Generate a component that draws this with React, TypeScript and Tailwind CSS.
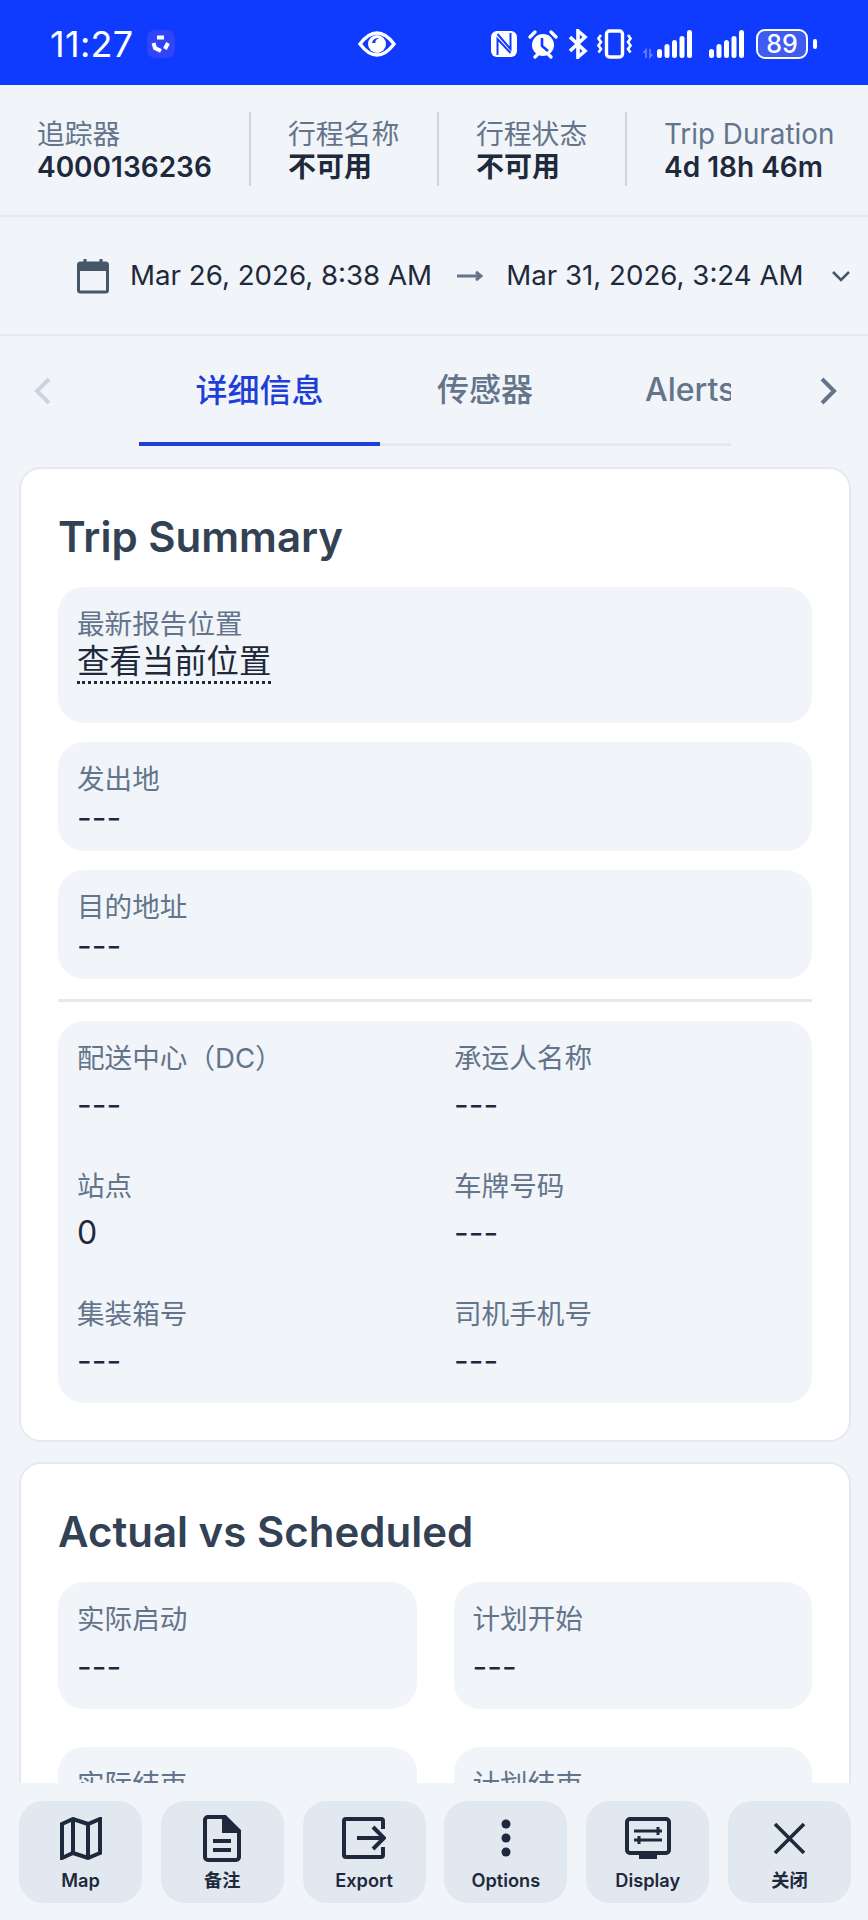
import React from "react";

const F = { fontFamily: 'Inter, "Noto Sans CJK SC", sans-serif' };

function Stat({ label, value, cls }: { label: string; value: string; cls: string }) {
  return (
    <div className={cls}>
      <div className="text-[27.8px] leading-[36px] text-[#64748b]">{label}</div>
      <div className="-mt-[1px] text-[28px] leading-[32px] font-semibold text-[#1e293b]">{value}</div>
    </div>
  );
}

function Box({ label, value }: { label: string; value: string }) {
  return (
    <div className="h-[109px] rounded-[26px] bg-[#f1f5f9] px-[19px] pt-[18px]">
      <div className="text-[27.6px] leading-[38px] text-[#64748b]">{label}</div>
      <div className="mt-[1px] text-[32px] leading-[38px] text-[#1e293b]">{value}</div>
    </div>
  );
}

function GridField({ label, value }: { label: string; value: string }) {
  return (
    <div className="h-[128px]">
      <div className="text-[27.6px] leading-[38px] text-[#64748b]">{label}</div>
      <div className="mt-[9px] text-[32px] leading-[38px] text-[#1e293b]">{value}</div>
    </div>
  );
}

function Big({ label, value }: { label: string; value: string }) {
  return (
    <div className="h-[127px] rounded-[26px] bg-[#f1f5f9] px-[19px] pt-[18px]">
      <div className="text-[27.6px] leading-[38px] text-[#64748b]">{label}</div>
      <div className="mt-[10px] text-[32px] leading-[38px] text-[#1e293b]">{value}</div>
    </div>
  );
}

function ActionBtn({ label, children }: { label: string; children: React.ReactNode }) {
  return (
    <div className="flex h-[102px] w-[123px] flex-col items-center rounded-[24px] bg-[#e2e8f0]">
      <div className="mt-[12px] flex h-[50px] w-[50px] items-center justify-center">{children}</div>
      <div className="mt-[5px] text-[18.2px] leading-[24px] font-semibold text-[#1e293b]">{label}</div>
    </div>
  );
}

function Bars() {
  return (
    <>
      <rect x="0" y="20" width="5" height="9" rx="2.5" />
      <rect x="7.5" y="15" width="5" height="14" rx="2.5" />
      <rect x="15" y="11" width="5" height="18" rx="2.5" />
      <rect x="22.5" y="7" width="5" height="22" rx="2.5" />
      <rect x="30" y="1" width="5" height="28" rx="2.5" />
    </>
  );
}

function StatusIcons() {
  return (
    <div className="flex items-center text-white">
      <svg width="26" height="26" viewBox="0 0 26 26">
        <rect width="26" height="26" rx="6" fill="white" />
        <path d="M6.5 24V8l13 14M19.5 2v16L6.5 3" fill="none" stroke="#0f3bff" strokeWidth="2" />
      </svg>
      <svg width="30" height="30" viewBox="0 0 30 30" className="ml-[11px]">
        <circle cx="15" cy="16" r="11" fill="white" />
        <path d="M14 9v8l6 5" fill="none" stroke="#0f3bff" strokeWidth="2.6" />
        <path d="M2 8l5-5M28 8l-5-5M7 28l3-3M23 28l-3-3" fill="none" stroke="white" strokeWidth="3.2" strokeLinecap="round" />
      </svg>
      <svg width="20" height="30" viewBox="0 0 20 30" className="ml-[10px]" fill="none" stroke="white" strokeWidth="3.6">
        <path d="M2 8l15 14-7 6V2l7 6L2 22" />
      </svg>
      <svg width="35" height="30" viewBox="0 0 35 30" className="ml-[9px]" fill="none" stroke="white">
        <rect x="9.5" y="2" width="16" height="26" rx="3" strokeWidth="3.4" />
        <path d="M4 6L1.5 9.5 4 13 1.5 16.5 4 20 1.5 23.5M31 6l2.5 3.5L31 13l2.5 3.5L31 20l2.5 3.5" strokeWidth="2.6" />
      </svg>
      <svg width="50" height="30" viewBox="0 0 50 30" className="ml-[11px]" fill="white">
        <path d="M3 29v-8l-2.5 3M7 20v8l2.5-3" fill="none" stroke="#6a85ff" strokeWidth="1.6" />
        <g transform="translate(14 0)"><Bars /></g>
      </svg>
      <svg width="36" height="30" viewBox="0 0 36 30" className="ml-[16px]" fill="white">
        <Bars />
      </svg>
      <div className="relative ml-[11px] flex h-[30px] w-[52px] items-center justify-center overflow-visible rounded-[9px] border-[2.5px] border-white bg-[#3f5cf2] text-[25px] leading-none font-medium">
        89
        <span className="absolute right-[-11px] top-[8px] h-[10px] w-[4px] rounded-full bg-white" />
      </div>
    </div>
  );
}

export default function App() {
  return (
    <div style={F} className="flex h-[1920px] w-[868px] flex-col overflow-hidden bg-[#f1f5f9]">
      <div className="flex h-[85px] shrink-0 items-center bg-[#0f3bff] pl-[50px] pt-[3px] text-white">
        <div className="w-[97px] text-[36px] leading-none tracking-[0.3px]">11:27</div>
        <div className="flex h-[28px] w-[28px] items-center justify-center rounded-[8px] bg-[#2f45f7]">
          <svg width="20" height="20" viewBox="0 0 20 20" fill="none" stroke="white" strokeWidth="4">
            <path d="M6 3.5h7M17 9l-3 6M10 17l-6-3-1.500-5" />
          </svg>
        </div>
        <div className="ml-[183px]">
          <svg width="38" height="26" viewBox="0 0 38 26">
            <path d="M2 13C8 5 13 2 19 2s11 3 17 11c-6 8-11 11-17 11S8 21 2 13z" fill="none" stroke="white" strokeWidth="3.4" />
            <circle cx="19" cy="13" r="9" fill="white" />
            <path d="M14 12a6 6 0 0 1 7-5c-3 1-4 3-3.500 5z" fill="#0f3bff" />
          </svg>
        </div>
        <div className="ml-[95px]"><StatusIcons /></div>
      </div>

      <div className="flex h-[132px] shrink-0 items-center border-b-2 border-[#e5e9ef] pb-[2px]">
        <Stat cls="w-[249px] pl-[37px]" label="追踪器" value="4000136236" />
        <div className="h-[74px] w-[2px] bg-[#cbd5e1]" />
        <Stat cls="w-[186px] pl-[37px]" label="行程名称" value="不可用" />
        <div className="h-[74px] w-[2px] bg-[#cbd5e1]" />
        <Stat cls="w-[186px] pl-[37px]" label="行程状态" value="不可用" />
        <div className="h-[74px] w-[2px] bg-[#cbd5e1]" />
        <Stat cls="flex-1 pl-[37px] whitespace-nowrap" label="Trip Duration" value="4d 18h 46m" />
      </div>

      <div className="flex h-[119px] shrink-0 items-center border-b-2 border-[#e5e9ef] pl-[77px] text-[#1e293b]">
        <svg width="32" height="36" viewBox="0 0 32 36" fill="none" className="text-[#475569]">
          <rect x="1.500" y="5" width="29" height="29" rx="2" stroke="currentColor" strokeWidth="3" />
          <rect x="1.500" y="5" width="29" height="8" fill="currentColor" />
          <path d="M8 1v6M24 1v6" stroke="currentColor" strokeWidth="3" />
        </svg>
        <span className="ml-[21px] whitespace-nowrap text-[27.7px]">Mar 26, 2026, 8:38 AM</span>
        <svg width="26" height="14" viewBox="0 0 26 14" className="ml-[25px]" fill="none" stroke="#64748b" strokeWidth="3">
          <path d="M0 7h24M19 3l5 4-5 4" />
        </svg>
        <span className="ml-[23px] whitespace-nowrap text-[27.7px]">Mar 31, 2026, 3:24 AM</span>
        <svg width="18" height="12" viewBox="0 0 18 12" className="ml-[28px]" fill="none" stroke="#475569" strokeWidth="2.500">
          <path d="M1 2l8 8 8-8" />
        </svg>
      </div>

      <div className="flex h-[111px] shrink-0 items-start">
        <div className="flex h-[110px] w-[139px] items-center pl-[33px]">
          <svg width="18" height="28" viewBox="0 0 18 28" fill="none" stroke="#cbd5e1" strokeWidth="4"><path d="M16 2L4 14l12 12" /></svg>
        </div>
        <div className="flex h-[110px] w-[592px] border-b-[3px] border-[#e5e9ef]">
          <div className="relative flex h-[110px] w-[241px] shrink-0 items-center justify-center text-[32px] font-medium text-[#1d3fd8]">
            详细信息
            <span className="absolute inset-x-0 bottom-0 h-[4px] bg-[#1d3fd8]" />
          </div>
          <div className="flex w-[210px] shrink-0 items-center justify-center text-[32px] font-medium text-[#64748b]">传感器</div>
          <div className="flex min-w-0 flex-1 items-center overflow-hidden pl-[55px] text-[32px] font-medium text-[#64748b]">Alerts</div>
        </div>
        <div className="flex h-[110px] flex-1 items-center pl-[89px]">
          <svg width="18" height="28" viewBox="0 0 18 28" fill="none" stroke="#64748b" strokeWidth="4"><path d="M2 2l12 12L2 26" /></svg>
        </div>
      </div>

      <div className="min-h-0 flex-1 overflow-hidden pl-[19px] pr-[17px] pt-[20px]">
        <div className="h-[975px] rounded-[22px] border-2 border-[#e5e9ef] bg-white px-[37px] pt-[44px]">
          <h2 className="text-[42px] leading-[48px] font-semibold text-[#334155]">Trip Summary</h2>
          <div className="mt-[26px] h-[136px] rounded-[26px] bg-[#f1f5f9] px-[19px] pt-[18px]">
            <div className="text-[27.6px] leading-[38px] text-[#64748b]">最新报告位置</div>
            <div className="text-[32.4px] leading-[38px] text-[#1e293b]">
              <span className="border-b-[3px] border-dotted border-[#1e293b]">查看当前位置</span>
            </div>
          </div>
          <div className="mt-[19px]"><Box label="发出地" value="---" /></div>
          <div className="mt-[19px]"><Box label="目的地址" value="---" /></div>
          <div className="mt-[20px] h-[3px] bg-[#e5e9ef]" />
          <div className="mt-[19px] grid h-[382px] grid-cols-[377px_1fr] rounded-[26px] bg-[#f1f5f9] pl-[19px] pt-[18px]">
            <GridField label="配送中心（DC）" value="---" />
            <GridField label="承运人名称" value="---" />
            <GridField label="站点" value="0" />
            <GridField label="车牌号码" value="---" />
            <GridField label="集装箱号" value="---" />
            <GridField label="司机手机号" value="---" />
          </div>
        </div>
        <div className="mt-[20px] h-[500px] rounded-[22px] border-2 border-[#e5e9ef] bg-white px-[37px] pt-[44px]">
          <h2 className="text-[42px] leading-[48px] font-semibold text-[#334155]">Actual vs Scheduled</h2>
          <div className="mt-[26px] grid grid-cols-2 gap-x-[37px] gap-y-[38px]">
            <Big label="实际启动" value="---" />
            <Big label="计划开始" value="---" />
            <Big label="实际结束" value="---" />
            <Big label="计划结束" value="---" />
          </div>
        </div>
      </div>

      <div className="flex h-[137px] shrink-0 items-start justify-between bg-[#f1f5f9] pl-[19px] pr-[17px] pt-[18px]">
        <ActionBtn label="Map">
          <svg width="42" height="43" viewBox="0 0 42 43" fill="none" stroke="#1e293b" strokeWidth="4">
            <path d="M2 7l11-5 15 5 12-5v34l-12 5-15-5-11 5zM13 2v34M28 7v34" />
          </svg>
        </ActionBtn>
        <ActionBtn label="备注">
          <svg width="38" height="47" viewBox="0 0 38 47" fill="none" stroke="#1e293b" strokeWidth="4">
            <path d="M2 5a3 3 0 0 1 3-3h17l14 14v26a3 3 0 0 1-3 3H5a3 3 0 0 1-3-3z" />
            <path d="M21 2l15 14H21z" fill="#1e293b" />
            <path d="M10 26h18M10 35h18" />
          </svg>
        </ActionBtn>
        <ActionBtn label="Export">
          <svg width="44" height="42" viewBox="0 0 44 42" fill="none" stroke="#1e293b" strokeWidth="4">
            <path d="M41 12V4a2 2 0 0 0-2-2H4a2 2 0 0 0-2 2v34a2 2 0 0 0 2 2h35a2 2 0 0 0 2-2v-8" />
            <path d="M15 21h27M31 10l11 11-11 11" />
          </svg>
        </ActionBtn>
        <ActionBtn label="Options">
          <svg width="10" height="38" viewBox="0 0 10 38" fill="#1e293b">
            <circle cx="5" cy="5" r="4.500" /><circle cx="5" cy="19" r="4.500" /><circle cx="5" cy="33" r="4.500" />
          </svg>
        </ActionBtn>
        <ActionBtn label="Display">
          <svg width="46" height="42" viewBox="0 0 46 42" fill="none" stroke="#1e293b" strokeWidth="4">
            <rect x="2" y="2" width="42" height="34" rx="3" />
            <rect x="14" y="36" width="18" height="6" fill="#1e293b" stroke="none" />
            <path d="M9 14h28M33 10v8M9 23h28M14 19v8" strokeWidth="3" />
          </svg>
        </ActionBtn>
        <ActionBtn label="关闭">
          <svg width="33" height="33" viewBox="0 0 33 33" fill="none" stroke="#1e293b" strokeWidth="3.600">
            <path d="M2 2l29 29M31 2L2 31" />
          </svg>
        </ActionBtn>
      </div>
    </div>
  );
}
